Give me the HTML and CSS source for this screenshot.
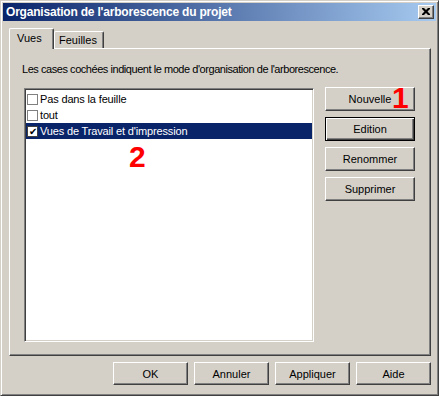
FILE: index.html
```html
<!DOCTYPE html>
<html lang="fr">
<head>
    <meta charset="UTF-8">
    <title>Organisation de l'arborescence du projet</title>
    <link rel="stylesheet" href="styles.css">
</head>
<body>
    <div class="window">
        <div class="titlebar">
            <span class="title">Organisation de l'arborescence du projet</span>
            <button class="close">
                <svg width="8" height="7" viewBox="0 0 8 7">
                    <path d="M0 0h2l2 2 2-2h2v1l-2.5 2.5L8 6v1H6L4 5 2 7H0V6l2.5-2.5L0 1z" fill="#000"/>
                </svg>
            </button>
        </div>

        <div class="body">
            <div class="tabs">
                <div class="tab active">Vues</div>
                <div class="tab">Feuilles</div>
            </div>

            <div class="panel">
                <p class="hint">Les cases cochées indiquent le mode d'organisation de l'arborescence.</p>
                <div class="panel-main">
                    <div class="listbox">
                        <div class="row"><span class="check"></span>Pas dans la feuille</div>
                        <div class="row"><span class="check"></span>tout</div>
                        <div class="row selected"><span class="check on">&#10004;</span>Vues de Travail et d'impression</div>
                    </div>
                    <div class="side-buttons">
                        <button class="btn">Nouvelle</button>
                        <button class="btn default">Edition</button>
                        <button class="btn">Renommer</button>
                        <button class="btn">Supprimer</button>
                    </div>
                </div>
                <span class="marker m1">1</span>
                <span class="marker m2">2</span>
            </div>

            <div class="footer">
                <button class="btn wide">OK</button>
                <button class="btn wide">Annuler</button>
                <button class="btn wide">Appliquer</button>
                <button class="btn wide">Aide</button>
            </div>
        </div>
    </div>
</body>
</html>
```

FILE: styles.css
```css
body {
    margin: 0;
    background: #fff;
    font-family: 'Liberation Sans', Arial, sans-serif;
    font-size: 11px;
    color: #000;
}
.window {
    width: 439px;
    height: 396px;
    box-sizing: border-box;
    background: #d4d0c8;
    border: 1px solid;
    border-color: #d4d0c8 #404040 #404040 #d4d0c8;
    box-shadow: inset 1px 1px #fff, inset -1px -1px #808080;
    padding: 2px;
    display: flex;
    flex-direction: column;
}
.titlebar {
    height: 18px;
    display: flex;
    align-items: center;
    justify-content: space-between;
    padding: 0 2px 0 3px;
    background: linear-gradient(to right, #0a246a, #a6caf0);
}
.title {
    color: #fff;
    font-weight: bold;
    font-size: 12px;
    letter-spacing: -0.2px;
}
.close {
    width: 16px;
    height: 14px;
    padding: 0;
    border: 1px solid;
    border-color: #fff #404040 #404040 #fff;
    box-shadow: inset -1px -1px #808080;
    background: #d4d0c8;
    display: flex;
    align-items: center;
    justify-content: center;
}
.close svg {
    display: block;
    margin-top: -1px;
}
.body {
    flex: 1;
    padding: 7px 5px 0 6px;
    display: flex;
    flex-direction: column;
}
.tabs {
    display: flex;
    align-items: flex-end;
    height: 20px;
}
.tab {
    height: 17px;
    box-sizing: border-box;
    padding: 2px 6px 0 4px;
    border-top: 1px solid #fff;
    border-left: 1px solid #fff;
    border-right: 1px solid #404040;
    box-shadow: inset -1px 0 #808080;
    border-radius: 2px 2px 0 0;
}
.tab.active {
    width: 45px;
    height: 21px;
    margin-bottom: -1px;
    padding: 3px 0 0 7px;
    background: #d4d0c8;
    position: relative;
    z-index: 1;
}
.panel {
    position: relative;
    height: 308px;
    box-sizing: border-box;
    border: 1px solid;
    border-color: #fff #404040 #404040 #fff;
    box-shadow: inset -1px -1px #808080;
    padding: 0 0 0 12px;
}
.hint {
    margin: 14px 0 0;
    line-height: 13px;
    letter-spacing: -0.45px;
}
.panel-main {
    display: flex;
    align-items: flex-start;
    margin-top: 11px;
}
.listbox {
    width: 290px;
    height: 254px;
    box-sizing: border-box;
    margin-left: 2px;
    margin-top: 1px;
    background: #fff;
    border: 1px solid;
    border-color: #808080 #fff #fff #808080;
    box-shadow: inset 1px 1px #404040, inset -1px -1px #d4d0c8;
    padding: 2px 1px 0 1px;
}
.row {
    height: 16px;
    display: flex;
    align-items: center;
    white-space: nowrap;
    letter-spacing: -0.15px;
}
.row.selected {
    background: #0a246a;
    color: #fff;
}
.check {
    width: 11px;
    height: 11px;
    box-sizing: border-box;
    margin: 0 2px 0 1px;
    border: 1px solid #808080;
    background: #fff;
    color: #000;
    font-size: 10px;
    line-height: 9px;
    text-align: center;
}
.check.on {
    border-color: #404040;
}
.side-buttons {
    display: flex;
    flex-direction: column;
    gap: 6px;
    margin-left: 11px;
}
.btn {
    width: 90px;
    height: 24px;
    padding: 0;
    font-family: inherit;
    font-size: 11px;
    color: #000;
    background: #d4d0c8;
    border: 1px solid;
    border-color: #fff #404040 #404040 #fff;
    box-shadow: inset -1px -1px #808080;
}
.btn.default {
    border-color: #000;
    box-shadow: inset 1px 1px #fff, inset -1px -1px #404040, inset -2px -2px #808080;
}
.btn.wide {
    width: 75px;
    height: 23px;
}
.footer {
    display: flex;
    justify-content: flex-end;
    gap: 6px;
    margin-top: 6px;
}
.marker {
    position: absolute;
    color: #f00;
    font-weight: bold;
    font-size: 30px;
    line-height: 30px;
}
.m1 {
    left: 382px;
    top: 34px;
}
.m2 {
    left: 119px;
    top: 93px;
}
```
